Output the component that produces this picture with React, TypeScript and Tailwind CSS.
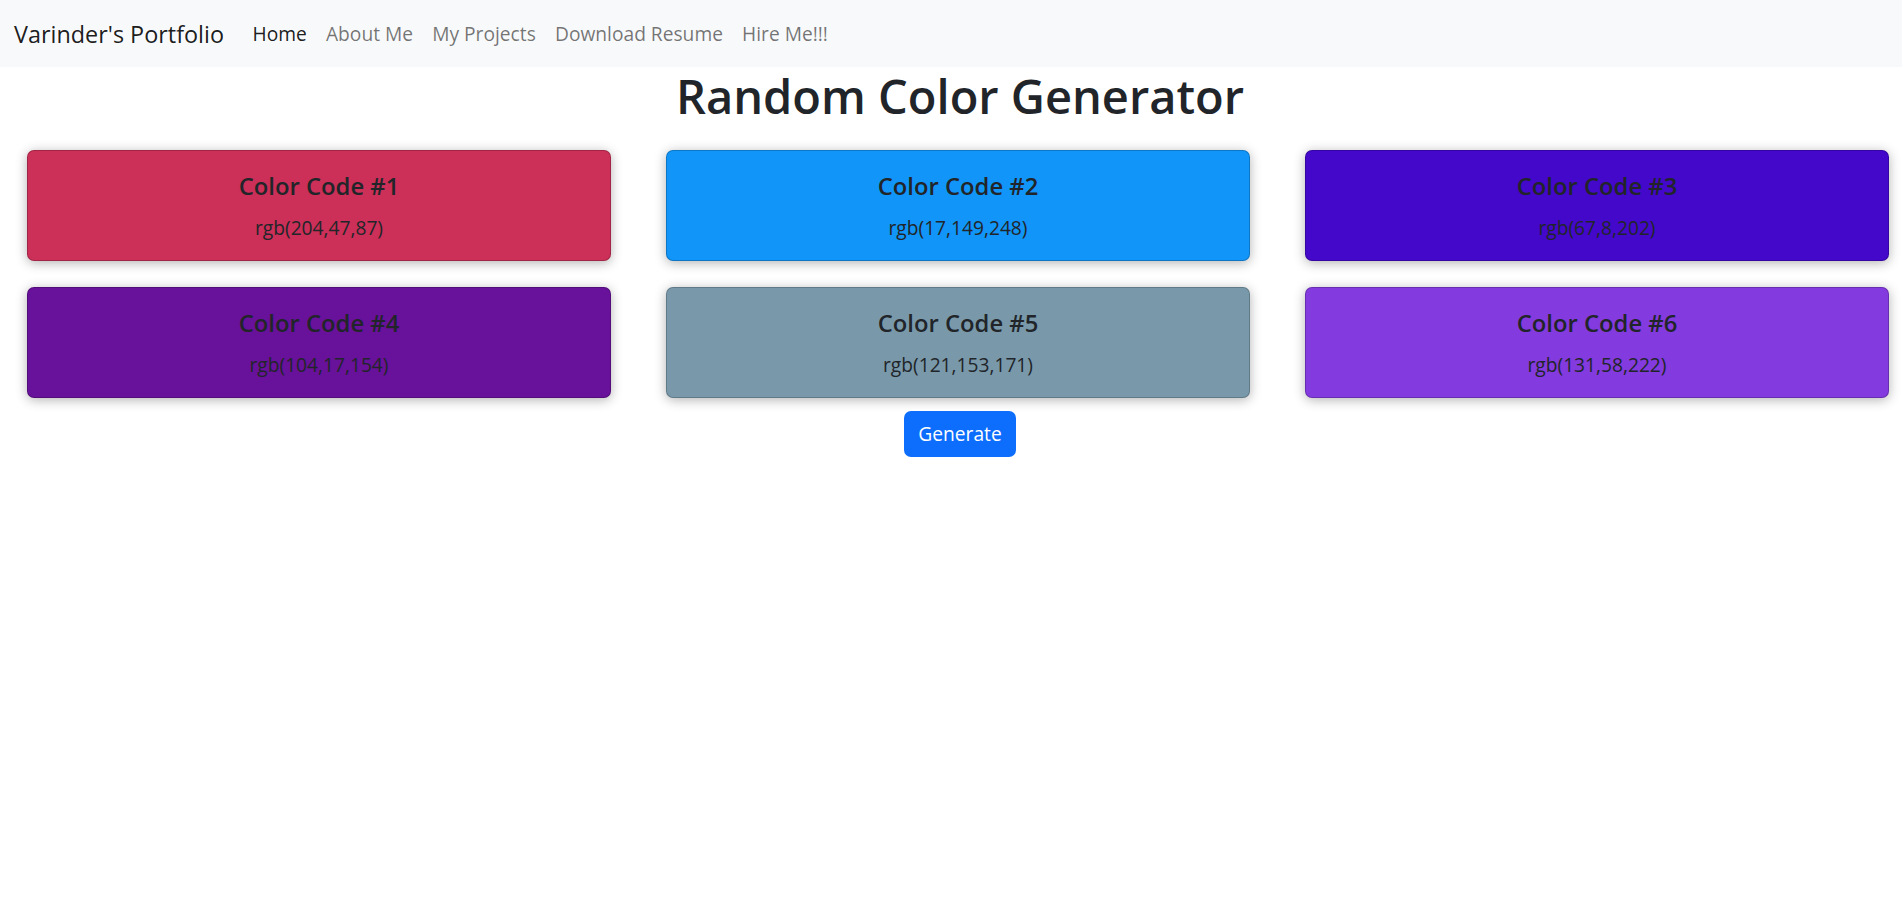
import React from 'react';

interface ColorSwatch {
  r: number;
  g: number;
  b: number;
}

const swatches: ColorSwatch[] = [
  { r: 204, g: 47, b: 87 },
  { r: 17, g: 149, b: 248 },
  { r: 67, g: 8, b: 202 },
  { r: 104, g: 17, b: 154 },
  { r: 121, g: 153, b: 171 },
  { r: 131, g: 58, b: 222 },
];

const navLinks = ['Home', 'About Me', 'My Projects', 'Download Resume', 'Hire Me!!!'];

const ColorCard: React.FC<{ swatch: ColorSwatch; index: number }> = ({ swatch, index }) => {
  const rgb = `rgb(${swatch.r},${swatch.g},${swatch.b})`;
  return (
    <div
      className="w-[584px] h-[111px] flex flex-col items-center pt-[21px] rounded-[7px] border border-black/20 shadow-[0_2px_12px_rgba(0,0,0,0.3)] text-[#212529]"
      style={{ backgroundColor: rgb }}
    >
      <h5 className="text-[23.8px] leading-[29px] font-semibold">Color Code #{index + 1}</h5>
      <p className="mt-[13px] text-[19.2px] leading-[28px]">{rgb}</p>
    </div>
  );
};

export default function App() {
  return (
    <div className="min-h-screen w-full overflow-hidden bg-white font-['Open_Sans',sans-serif]">
      {/* Navbar */}
      <nav className="h-[67px] bg-[#f8f9fa] flex items-center px-[14px]">
        <a href="#" className="text-[23.4px] leading-[36px] text-black/90 mr-[19px]">
          Varinder's Portfolio
        </a>
        <ul className="flex">
          {navLinks.map((link, i) => (
            <li key={link}>
              <a
                href="#"
                className={`block px-[9.6px] text-[19.2px] leading-[29px] ${i === 0 ? 'text-black/90' : 'text-black/55'}`}
              >
                {link}
              </a>
            </li>
          ))}
        </ul>
      </nav>

      <div className="w-[1920px]">
        <h1 className="text-center text-[47px] leading-[58px] font-semibold text-[#212529] mb-[16px]">
          Random Color Generator
        </h1>

        {/* Color grid */}
        <div className="flex flex-col gap-[26px] pl-[27px] pt-[9px]">
          <div className="flex gap-[55px]">
            {swatches.slice(0, 3).map((s, i) => (
              <ColorCard key={i} swatch={s} index={i} />
            ))}
          </div>
          <div className="flex gap-[55px]">
            {swatches.slice(3).map((s, i) => (
              <ColorCard key={i + 3} swatch={s} index={i + 3} />
            ))}
          </div>
        </div>

        <div className="flex justify-center mt-[13px]">
          <button className="w-[112px] h-[46px] rounded-[7px] bg-[#0d6efd] text-white text-[19.2px]">
            Generate
          </button>
        </div>
      </div>
    </div>
  );
}
